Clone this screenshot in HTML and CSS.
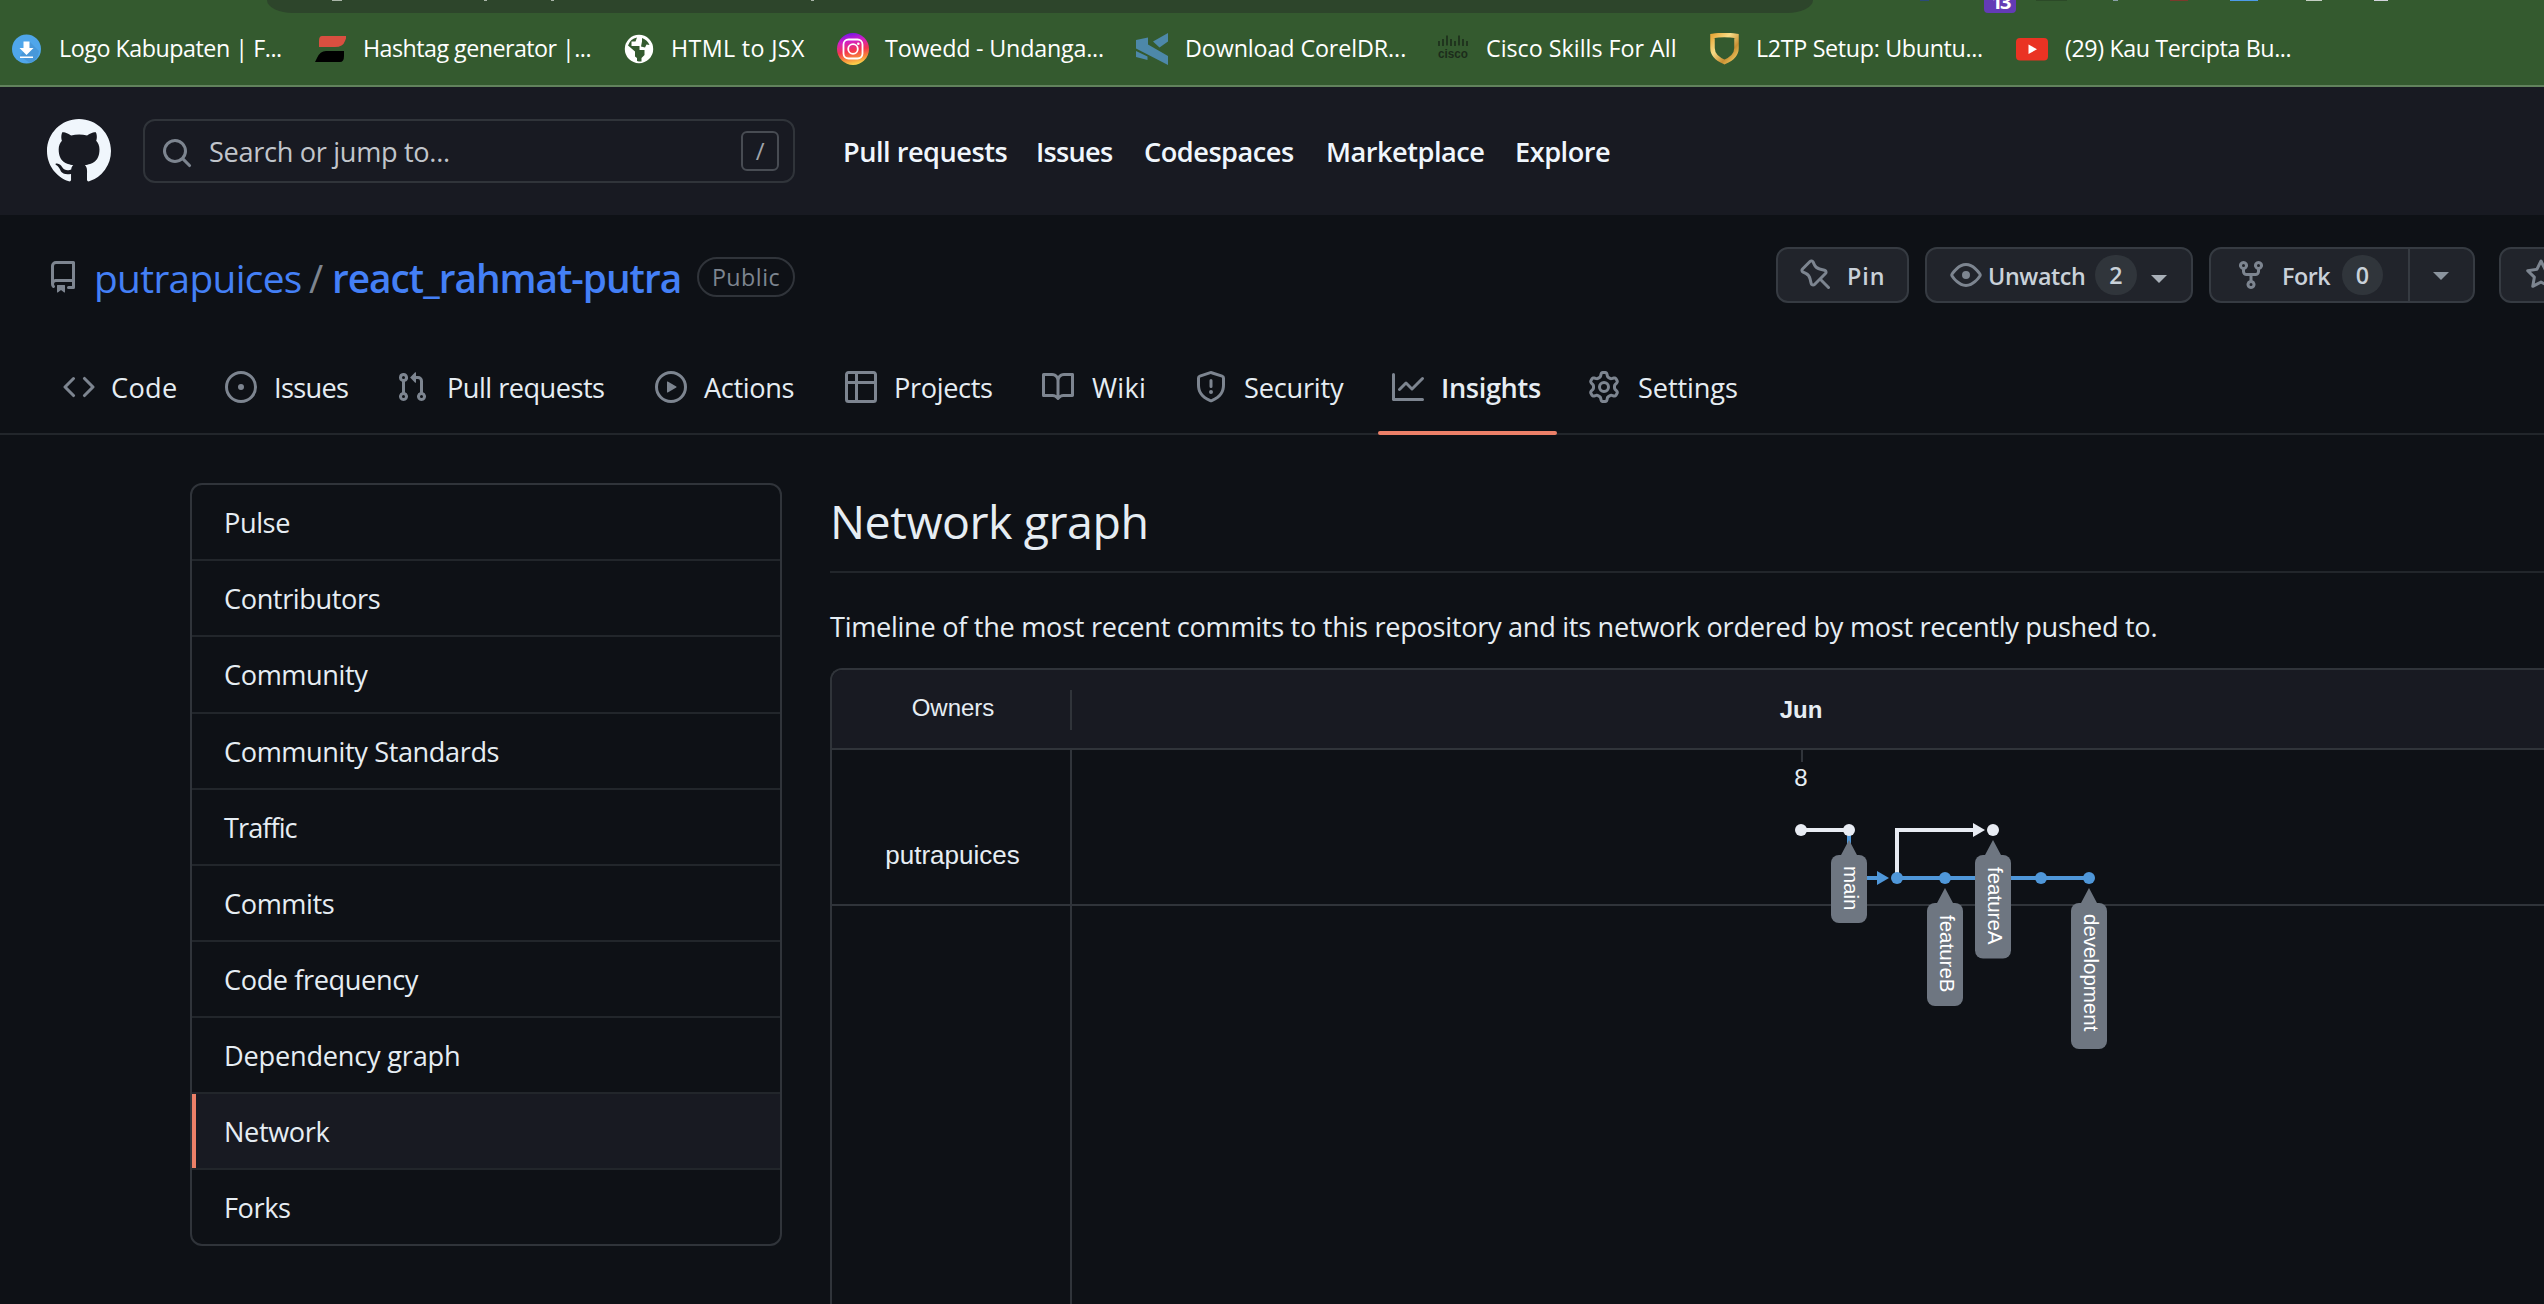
FILE: index.html
```
<!DOCTYPE html>
<html lang="en">
<head>
<meta charset="utf-8">
<title>Network Graph · putrapuices/react_rahmat-putra</title>
<link rel="stylesheet" href="styles.css">
</head>
<body>
<div class="chrome">
  <div class="toolbar">
    <div class="omnibox"><i class="bit b1"></i><i class="bit b2"></i><i class="bit b3"></i><i class="bit b4"></i></div>
    <i class="ext e1"></i>
    <div class="badge"><span>13</span></div>
    <i class="ext e2"></i><i class="ext e3"></i><i class="ext e4"></i><i class="ext e5"></i><i class="ext e6"></i><i class="ext e7"></i>
  </div>
  <div class="bookmarks">
    <a><svg viewBox="0 0 32 32"><circle cx="16.500" cy="16" r="14.500" fill="#4fa6ea"/><path d="M20 9l9 9a14.500 14.500 0 0 1-9 12l-10-7z" fill="#4898d9"/><path d="M13.500 8.500h6v6.500h4l-7 7-7-7h4zM10 23.500h13v1.500H10z" fill="#fff"/></svg><span>Logo Kabupaten | F...</span></a>
    <a><svg viewBox="0 0 32 32"><path d="M8 3h25l-2 5q-2 6-10 6H5V8q0-5 3-5z" fill="#d94f40"/><path d="M12 18h18v5q0 6-4 6H1l2-4q3-7 9-7z" fill="#000"/></svg><span>Hashtag generator |...</span></a>
    <a><svg viewBox="0 0 32 32"><circle cx="17" cy="16" r="14.200" fill="#fff"/><path d="M15 4.500l-1.500 4H9.500v4.500h8v4h5v5l-3 3v3.500A12 12 0 0 1 15 28v-3l-2-1.500v-5L6 12.500Q8.500 5.500 15 4.500zM20 5q5.500 2 7.500 7l-3-.5-1.500 3-4-1 1-5z" fill="#345a2f"/></svg><span>HTML to JSX</span></a>
    <a><svg viewBox="0 0 32 32"><defs><linearGradient id="ig" x1=".25" y1="0" x2=".45" y2="1"><stop offset="0" stop-color="#6a16ea"/><stop offset=".28" stop-color="#d41fc5"/><stop offset=".58" stop-color="#f3364e"/><stop offset=".8" stop-color="#f8853a"/><stop offset="1" stop-color="#fbd34b"/></linearGradient></defs><circle cx="16" cy="16" r="16" fill="url(#ig)"/><g fill="none" stroke="#fff" stroke-width="1.800"><rect x="6.500" y="6.500" width="19" height="19" rx="5"/><circle cx="16" cy="16" r="4.800"/></g><circle cx="21.300" cy="10.700" r="1.300" fill="#fff"/></svg><span>Towedd - Undanga...</span></a>
    <a><svg viewBox="0 0 32 32"><path d="M0 7l12-2.500v7L32 23v9L0 15.500zM17 8.500L32 0v8.500l-8.500 6zM0 18l11.500 5.500V27L0 24z" fill="#4d88a9"/></svg><span>Download CorelDR...</span></a>
    <a><svg viewBox="0 0 32 32"><path d="M2 8v5M6 6v7M10 2.500v10M14 6v7M18 8v5M22 2.500v10M26 6v7M30 8v5" stroke="#1c2c1b" stroke-width="1.600"/><text x="1" y="25" textLength="30" lengthAdjust="spacingAndGlyphs" class="cisco">cisco</text></svg><span>Cisco Skills For All</span></a>
    <a><svg viewBox="0 0 32 32"><defs><linearGradient id="gd" x1="0" y1="0" x2="1" y2="1"><stop offset="0" stop-color="#e8a93a"/><stop offset=".35" stop-color="#f8dc86"/><stop offset=".7" stop-color="#c98f33"/><stop offset="1" stop-color="#f5d268"/></linearGradient></defs><path d="M4.500 3Q16 1 28.500 3V15q0 9-12 14Q4.500 24 4.500 15z" fill="none" stroke="url(#gd)" stroke-width="4.500"/></svg><span>L2TP Setup: Ubuntu...</span></a>
    <a><svg viewBox="0 0 32 32"><rect y="5" width="32" height="22.500" rx="4" fill="#ea3323"/><path d="M12.500 11.500v9.500l8.500-4.800z" fill="#fff"/></svg><span>(29) Kau Tercipta Bu...</span></a>
  </div>
</div>

<header class="topbar">
  <svg class="mark" viewBox="0 0 16 16"><path d="M8 0C3.580 0 0 3.580 0 8c0 3.540 2.290 6.530 5.470 7.590.4.070.55-.17.55-.38 0-.19-.01-.82-.01-1.490-2.010.37-2.530-.49-2.690-.94-.09-.23-.48-.94-.82-1.130-.28-.15-.68-.52-.01-.53.63-.01 1.080.58 1.230.82.72 1.210 1.870.87 2.330.66.070-.52.28-.87.51-1.070-1.780-.2-3.640-.89-3.640-3.950 0-.87.31-1.590.82-2.150-.08-.2-.36-1.020.080-2.120 0 0 .67-.21 2.200.82.64-.18 1.320-.27 2-.27.68 0 1.360.09 2 .27 1.530-1.040 2.200-.82 2.200-.82.44 1.100.16 1.920.080 2.120.51.56.82 1.270.82 2.150 0 3.070-1.870 3.750-3.650 3.950.29.25.54.73.54 1.480 0 1.070-.01 1.930-.01 2.200 0 .21.15.46.55.38A8.013 8.013 0 0016 8c0-4.420-3.580-8-8-8z"/></svg>
  <div class="search">
    <svg class="icon" viewBox="0 0 16 16"><path d="M11.500 7a4.499 4.499 0 11-8.998 0A4.499 4.499 0 0111.500 7zm-.82 4.740a6 6 0 111.060-1.060l3.040 3.040a.75.75 0 11-1.060 1.060l-3.040-3.040z"/></svg>
    <span class="hint">Search or jump to...</span><kbd>/</kbd>
  </div>
  <nav class="global"><a>Pull requests</a><a>Issues</a><a>Codespaces</a><a>Marketplace</a><a>Explore</a></nav>
</header>

<section class="repohead">
  <div class="titlerow">
    <svg class="icon repo" viewBox="0 0 16 16"><path d="M2 2.500A2.500 2.500 0 014.500 0h8.750a.75.75 0 01.75.75v12.500a.75.75 0 01-.75.75h-2.500a.75.75 0 110-1.500h1.750v-2h-8a1 1 0 00-.714 1.700.75.75 0 01-1.072 1.050A2.495 2.495 0 012 11.500v-9zm10.500-1V9h-8c-.356 0-.694.074-1 .208V2.500a1 1 0 011-1h8zM5 12.250v3.250a.25.25 0 00.4.2l1.450-1.087a.25.25 0 01.3 0L8.600 15.700a.25.25 0 00.4-.2v-3.250a.25.25 0 00-.25-.25h-3.500a.25.25 0 00-.25.25z"/></svg>
    <h1><a class="owner">putrapuices</a><span class="sep">/</span><a class="name">react_rahmat-putra</a></h1>
    <span class="pill">Public</span>
    <div class="actions">
      <div class="btn pin"><svg class="icon" viewBox="0 0 16 16"><path d="M4.456.734a1.750 1.750 0 012.826.504l.613 1.327a3.081 3.081 0 002.084 1.707l2.454.584c1.332.317 1.800 1.972.832 2.940L11.060 10l3.720 3.720a.75.75 0 11-1.061 1.060L10 11.060l-2.204 2.205c-.968.968-2.623.5-2.940-.832l-.584-2.454a3.081 3.081 0 00-1.707-2.084l-1.327-.613a1.750 1.750 0 01-.504-2.826L4.456.734zM5.920 1.866a.25.25 0 00-.404-.072L1.794 5.516a.25.25 0 00.072.404l1.328.613A4.582 4.582 0 015.730 9.630l.584 2.454a.25.25 0 00.42.12l5.470-5.470a.25.25 0 00-.12-.42L9.630 5.730a4.581 4.581 0 01-3.098-2.537L5.920 1.866z"/></svg><span>Pin</span></div>
      <div class="btn watch"><svg class="icon" viewBox="0 0 16 16"><path d="M1.679 7.932c.412-.621 1.242-1.750 2.366-2.717C5.175 4.242 6.527 3.500 8 3.500c1.473 0 2.824.742 3.955 1.715 1.124.967 1.954 2.096 2.366 2.717a.119.119 0 010 .136c-.412.621-1.242 1.750-2.366 2.717C10.825 11.758 9.473 12.500 8 12.500c-1.473 0-2.824-.742-3.955-1.715C2.920 9.818 2.090 8.690 1.679 8.068a.119.119 0 010-.136zM8 2c-1.981 0-3.670.992-4.933 2.078C1.797 5.169.88 6.423.43 7.100a1.619 1.619 0 000 1.798c.45.678 1.367 1.932 2.637 3.024C4.329 13.008 6.019 14 8 14c1.981 0 3.670-.992 4.933-2.078 1.270-1.091 2.187-2.345 2.637-3.023a1.619 1.619 0 000-1.798c-.45-.678-1.367-1.932-2.637-3.023C11.671 2.992 9.981 2 8 2zm0 8a2 2 0 100-4 2 2 0 000 4z"/></svg><span>Unwatch</span><b class="count">2</b><i class="caret light"></i></div>
      <div class="btn fork"><div class="forkmain"><svg class="icon" viewBox="0 0 16 16"><path d="M5 3.250a.75.75 0 11-1.500 0 .75.75 0 011.500 0zm0 2.122a2.250 2.250 0 10-1.500 0v.878A2.250 2.250 0 005.750 8.500h1.500v2.128a2.251 2.251 0 101.500 0V8.500h1.500a2.250 2.250 0 002.250-2.250v-.878a2.250 2.250 0 10-1.500 0v.878a.75.75 0 01-.75.75h-4.500A.75.75 0 015 6.250v-.878zm3.750 7.378a.75.75 0 11-1.500 0 .75.75 0 011.500 0zm3-8.750a.75.75 0 100-1.500.75.75 0 000 1.500z"/></svg><span>Fork</span><b class="count">0</b></div><div class="forkmenu"><i class="caret"></i></div></div>
      <div class="btn star"><svg class="icon" viewBox="0 0 16 16"><path d="M8 .25a.75.75 0 01.673.418l1.882 3.815 4.210.612a.75.75 0 01.416 1.279l-3.046 2.970.719 4.192a.75.75 0 01-1.088.791L8 12.347l-3.766 1.980a.75.75 0 01-1.088-.79l.72-4.194L.818 6.374a.75.75 0 01.416-1.280l4.210-.611L7.327.668A.75.75 0 018 .25zm0 2.445L6.615 5.500a.75.75 0 01-.564.41l-3.097.45 2.240 2.184a.75.75 0 01.216.664l-.528 3.084 2.769-1.456a.75.75 0 01.698 0l2.770 1.456-.53-3.084a.75.75 0 01.216-.664l2.240-2.183-3.096-.45a.75.75 0 01-.564-.41L8 2.694v.001z"/></svg></div>
    </div>
  </div>
  <nav class="tabs">
    <a><svg class="icon" viewBox="0 0 16 16"><path d="M4.720 3.220a.75.75 0 011.060 1.060L2.060 8l3.720 3.720a.75.75 0 11-1.060 1.060L.47 8.530a.75.75 0 010-1.060l4.250-4.250zm6.560 0a.75.75 0 10-1.060 1.060L13.940 8l-3.720 3.720a.75.75 0 101.060 1.060l4.250-4.250a.75.75 0 000-1.060l-4.250-4.250z"/></svg><span>Code</span></a>
    <a><svg class="icon" viewBox="0 0 16 16"><path d="M8 9.500a1.500 1.500 0 100-3 1.500 1.500 0 000 3zM8 0a8 8 0 100 16A8 8 0 008 0zM1.500 8a6.500 6.500 0 1113 0 6.500 6.500 0 01-13 0z"/></svg><span>Issues</span></a>
    <a><svg class="icon" viewBox="0 0 16 16"><path d="M7.177 3.073L9.573.677A.25.25 0 0110 .854v4.792a.25.25 0 01-.427.177L7.177 3.427a.25.25 0 010-.354zM3.750 2.500a.75.75 0 100 1.500.75.75 0 000-1.500zm-2.250.75a2.250 2.250 0 113 2.122v5.256a2.251 2.251 0 11-1.500 0V5.372A2.250 2.250 0 011.500 3.250zM11 2.500h-1V4h1a1 1 0 011 1v5.628a2.251 2.251 0 101.500 0V5A2.500 2.500 0 0011 2.500zm1 10.250a.75.75 0 111.500 0 .75.75 0 01-1.500 0zM3.750 12a.75.75 0 100 1.500.75.75 0 000-1.500z"/></svg><span>Pull requests</span></a>
    <a><svg class="icon" viewBox="0 0 16 16"><path d="M1.500 8a6.500 6.500 0 1113 0 6.500 6.500 0 01-13 0zM8 0a8 8 0 100 16A8 8 0 008 0zM6.379 5.227A.25.25 0 006 5.442v5.117a.25.25 0 00.379.214l4.264-2.559a.25.25 0 000-.428L6.379 5.227z"/></svg><span>Actions</span></a>
    <a><svg class="icon" viewBox="0 0 16 16"><path d="M0 1.750C0 .784.784 0 1.750 0h12.500C15.216 0 16 .784 16 1.750v12.500A1.750 1.750 0 0114.250 16H1.750A1.750 1.750 0 010 14.250V1.750zM1.500 6.500v7.750c0 .138.112.25.25.25H5v-8H1.500zM5 5H1.500V1.750a.25.25 0 01.25-.25H5V5zm1.500 1.500v8h7.750a.25.25 0 00.25-.25V6.500h-8zm8-1.500h-8V1.500h7.750a.25.25 0 01.25.25V5z"/></svg><span>Projects</span></a>
    <a><svg class="icon" viewBox="0 0 16 16"><path d="M0 1.750A.75.75 0 01.75 1h4.253c1.227 0 2.317.59 3 1.501A3.744 3.744 0 0111.006 1h4.245a.75.75 0 01.75.75v10.500a.75.75 0 01-.75.75h-4.507a2.250 2.250 0 00-1.591.659l-.622.621a.75.75 0 01-1.060 0l-.622-.621A2.250 2.250 0 005.258 13H.75a.75.75 0 01-.75-.75V1.750zm8.755 3a2.250 2.250 0 012.250-2.250H14.500v9h-3.757c-.71 0-1.400.201-1.992.572l.004-7.322zm-1.504 7.324l.004-5.073-.002-2.253A2.250 2.250 0 005.003 2.500H1.500v9h3.757a3.750 3.750 0 011.994.574z"/></svg><span>Wiki</span></a>
    <a><svg class="icon" viewBox="0 0 16 16"><path d="M7.467.133a1.750 1.750 0 011.066 0l5.250 1.680A1.750 1.750 0 0115 3.480V7c0 1.566-.32 3.182-1.303 4.682-.983 1.498-2.585 2.813-5.032 3.855a1.700 1.700 0 01-1.330 0c-2.447-1.042-4.049-2.357-5.032-3.855C1.320 10.182 1 8.566 1 7V3.480a1.750 1.750 0 011.217-1.667l5.250-1.680zm.61 1.429a.25.25 0 00-.153 0l-5.250 1.680a.25.25 0 00-.174.238V7c0 1.358.275 2.666 1.057 3.860.784 1.194 2.121 2.340 4.366 3.297a.2.2 0 00.154 0c2.245-.956 3.582-2.104 4.366-3.298C13.225 9.666 13.500 8.360 13.500 7V3.480a.25.25 0 00-.174-.237l-5.250-1.680zM9 10.500a1 1 0 11-2 0 1 1 0 012 0zm-.25-5.750a.75.75 0 10-1.500 0v3a.75.75 0 001.500 0v-3z"/></svg><span>Security</span></a>
    <a class="active"><svg class="icon" viewBox="0 0 16 16"><path d="M1.500 1.750a.75.75 0 00-1.500 0v12.500c0 .414.336.75.75.75h14.500a.75.75 0 000-1.500H1.500V1.750zm14.280 2.530a.75.75 0 00-1.060-1.060L10 7.940 7.530 5.470a.75.75 0 00-1.060 0L3.220 8.720a.75.75 0 001.060 1.060L7 7.060l2.470 2.470a.75.75 0 001.060 0l5.250-5.250z"/></svg><span>Insights</span></a>
    <a><svg class="icon" viewBox="0 0 16 16"><path d="M7.429 1.525a6.593 6.593 0 011.142 0c.036.003.108.036.137.146l.289 1.105c.147.56.55.967.997 1.189.174.086.341.183.501.29.417.278.97.423 1.530.27l1.102-.303c.11-.03.175.016.195.046.219.31.41.641.573.989.014.031.022.11-.059.19l-.815.806c-.411.406-.562.957-.53 1.456a4.588 4.588 0 010 .582c-.032.499.119 1.050.53 1.456l.815.806c.08.08.073.159.059.19a6.494 6.494 0 01-.573.99c-.02.029-.086.074-.195.045l-1.103-.303c-.559-.153-1.112-.008-1.529.27-.16.107-.327.204-.5.29-.449.222-.851.628-.998 1.189l-.289 1.105c-.029.11-.101.143-.137.146a6.613 6.613 0 01-1.142 0c-.036-.003-.108-.037-.137-.146l-.289-1.105c-.147-.56-.55-.967-.997-1.189a4.502 4.502 0 01-.501-.29c-.417-.278-.97-.423-1.530-.27l-1.102.303c-.11.03-.175-.016-.195-.046a6.492 6.492 0 01-.573-.989c-.014-.031-.022-.11.059-.19l.815-.806c.411-.406.562-.957.53-1.456a4.587 4.587 0 010-.582c.032-.499-.119-1.050-.53-1.456l-.815-.806c-.08-.08-.073-.159-.059-.19a6.440 6.440 0 01.573-.99c.02-.029.086-.075.195-.045l1.103.303c.559.153 1.112.008 1.529-.27.16-.107.327-.204.5-.29.449-.222.851-.628.998-1.189l.289-1.105c.029-.11.101-.143.137-.146zM8 0c-.236 0-.47.01-.701.03-.743.065-1.290.615-1.458 1.261l-.29 1.106c-.017.066-.078.158-.211.224a5.994 5.994 0 00-.668.386c-.123.082-.233.09-.3.071L3.270 2.776c-.644-.177-1.392.02-1.820.63a7.977 7.977 0 00-.704 1.217c-.315.675-.111 1.422.363 1.891l.815.806c.05.048.098.147.088.294a6.084 6.084 0 000 .772c.01.147-.038.246-.088.294l-.815.806c-.474.469-.678 1.216-.363 1.891.2.428.436.835.704 1.218.428.609 1.176.806 1.820.63l1.103-.303c.066-.019.176-.011.299.071.213.143.436.272.668.386.133.066.194.158.212.224l.289 1.106c.169.646.715 1.196 1.458 1.260a8.094 8.094 0 001.402 0c.743-.064 1.290-.614 1.458-1.260l.29-1.106c.017-.066.078-.158.211-.224a5.980 5.980 0 00.668-.386c.123-.082.233-.09.3-.071l1.102.302c.644.177 1.392-.02 1.820-.63.268-.382.505-.789.704-1.217.315-.675.111-1.422-.364-1.891l-.814-.806c-.05-.048-.098-.147-.088-.294a6.100 6.100 0 000-.772c-.01-.147.039-.246.088-.294l.814-.806c.475-.469.679-1.216.364-1.891a7.992 7.992 0 00-.704-1.218c-.428-.609-1.176-.806-1.820-.63l-1.103.303c-.066.019-.176.011-.299-.071a5.991 5.991 0 00-.668-.386c-.133-.066-.194-.158-.212-.224L10.160 1.290C9.990.645 9.444.095 8.701.031A8.094 8.094 0 008 0zm1.500 8a1.500 1.500 0 11-3 0 1.500 1.500 0 013 0zM11 8a3 3 0 11-6 0 3 3 0 016 0z"/></svg><span>Settings</span></a>
  </nav>
</section>

<main class="layout">
  <nav class="menu">
    <a>Pulse</a><a>Contributors</a><a>Community</a><a>Community Standards</a><a class="tight">Traffic</a><a>Commits</a><a>Code frequency</a><a class="loose">Dependency graph</a><a class="selected">Network</a><a>Forks</a>
  </nav>
  <section class="content">
    <h2>Network graph</h2>
    <p>Timeline of the most recent commits to this repository and its network ordered by most recently pushed to.</p>
    <div class="network">
      <div class="nethead"><div class="owners">Owners</div></div>
      <div class="netrow"><div class="who">putrapuices</div></div>
      <div class="netrest"><div class="who"></div></div>
      <svg class="graph" width="1474" height="634" viewBox="1070 670 1474 634">
        <text x="1801" y="718" class="month">Jun</text>
        <path d="M1802 750v12" stroke="#30343a" stroke-width="2"/>
        <text x="1801" y="786" class="day">8</text>
        <g fill="none" stroke-width="4">
          <path d="M1849 830v48h30M1897 878h192" stroke="#4f97d9"/>
          <path d="M1801 830h48M1897 874v-44h78" stroke="#e8ecf3"/>
        </g>
        <path d="M1877 871l12 7-12 7z" fill="#4f97d9"/>
        <path d="M1973 823l12 7-12 7z" fill="#e8ecf3"/>
        <g fill="#e8ecf3"><circle cx="1801" cy="830" r="6"/><circle cx="1849" cy="830" r="6"/><circle cx="1993" cy="830" r="6"/></g>
        <g fill="#4f97d9"><circle cx="1897" cy="878" r="6"/><circle cx="1945" cy="878" r="6"/><circle cx="2041" cy="878" r="6"/><circle cx="2089" cy="878" r="6"/></g>
        <g fill="#6e7681">
          <path d="M1849 840l8 15h-16z"/><rect x="1831" y="855" width="36" height="68" rx="8"/>
          <path d="M1945 888l8 15h-16z"/><rect x="1927" y="903" width="36" height="103" rx="8"/>
          <path d="M1993 840l8 15h-16z"/><rect x="1975" y="855" width="36" height="103.500" rx="8"/>
          <path d="M2089 888l8 15h-16z"/><rect x="2071" y="903" width="36" height="146" rx="8"/>
        </g>
        <g class="branch">
          <text transform="translate(1843.5 866) rotate(90)">main</text>
          <text transform="translate(1939.5 915) rotate(90)">featureB</text>
          <text transform="translate(1987.5 867) rotate(90)">featureA</text>
          <text transform="translate(2083.5 914) rotate(90)">development</text>
        </g>
      </svg>
    </div>
  </section>
</main>
</body>
</html>
```
FILE: styles.css
```
* { box-sizing: border-box; }
body { margin: 0; height: 1304px; overflow: hidden; background: #0e1116; color: #e6edf3; font: 27.16px/42px "Open Sans", "Noto Sans", sans-serif; letter-spacing: -.013em; }
a, span, h1, h2, p, b { white-space: nowrap; }
svg { display: block; flex: none; }
.icon { width: 32px; height: 32px; fill: #7d8590; fill-rule: evenodd; }

/* browser chrome */
.chrome { height: 87px; background: #345a2f; border-bottom: 2px solid #62825d; color: #fff; }
.toolbar { display: flex; height: 13px; overflow: hidden; }
.omnibox { display: flex; width: 1546px; height: 13px; margin-left: 267px; background: #2d452b; border-radius: 0 0 26px 26px / 0 0 13px 13px; }
.bit { height: 1px; width: 3px; background: #a9b5a8; }
.b1 { width: 10px; margin-left: 65px; }
.b2 { margin-left: 142px; }
.b3 { margin-left: 64px; }
.b4 { margin-left: 257px; }
.ext { height: 1px; }
.e1 { width: 9px; margin-left: 107px; background: #2a4a78; }
.badge { display: flex; align-items: flex-end; justify-content: center; width: 32px; height: 13px; margin-left: 55px; background: #633bb5; border-radius: 0 0 4px 4px; font: 700 20px/28px "Open Sans", sans-serif; letter-spacing: -.12em; }
.badge span { margin-bottom: -3px; }
.e2 { width: 31px; margin-left: 20px; background: #2c4a28; }
.e3 { width: 5px; margin-left: 46px; background: #8aa0a8; }
.e4 { width: 18px; margin-left: 52px; background: #7b3a2c; }
.e5 { width: 28px; margin-left: 42px; background: #4c9be8; }
.e6 { width: 16px; margin-left: 48px; background: #c4cec3; }
.e7 { width: 14px; margin-left: 52px; background: #d3d3dc; }
.bookmarks { display: grid; grid-template-columns: 304px 308px 215px 299px 301px 271px 308px 1fr; height: 72px; padding-left: 10px; font-size: 23.28px; }
.bookmarks a { display: flex; align-items: center; gap: 17px; letter-spacing: -.014em; }
.bookmarks svg { width: 32px; height: 32px; }
.bookmarks span { margin-bottom: 2px; }
.bookmarks a:nth-child(1) { letter-spacing: -.02em; }
.bookmarks a:nth-child(2) { letter-spacing: -.023em; }
.bookmarks a:nth-child(3) { letter-spacing: .015em; }
.bookmarks a:nth-child(4) { letter-spacing: -.008em; gap: 16px; }
.bookmarks a:nth-child(5) { letter-spacing: -.004em; }
.bookmarks a:nth-child(6) { letter-spacing: 0; }
.bookmarks a:nth-child(7) { gap: 16px; }
.bookmarks a:nth-child(8) { letter-spacing: -.017em; }
.cisco { font: 700 13px "Liberation Sans", sans-serif; fill: #1c2c1b; letter-spacing: 0; }

/* site header */
.topbar { display: flex; align-items: center; height: 128px; padding-left: 47px; background: #181a22; }
.mark { width: 64px; height: 64px; fill: #f0f6fc; }
.search { display: flex; align-items: center; width: 652px; height: 64px; margin-left: 32px; padding: 0 14px 0 16px; border: 2px solid #30343a; border-radius: 12px; }
.search .icon { margin-top: 4px; }
.hint { margin: 2px 0 0 16px; color: #c1c5cb; letter-spacing: -.012em; }
kbd { display: grid; place-items: center; width: 38px; height: 40px; margin-left: auto; border: 2px solid #484c53; border-radius: 6px; color: #a0a4aa; font: 24px/30px "Open Sans", sans-serif; }
.global { display: grid; grid-template-columns: 193px 108px 182px 189px auto; margin: 2px 0 0 48px; font-weight: 600; color: #f0f6fc; letter-spacing: -.018em; }
.global a:nth-child(2) { letter-spacing: -.027em; }

/* repository heading */
.repohead { padding-top: 32px; border-bottom: 2px solid #22262b; height: 220px; }
.titlerow { display: flex; align-items: center; height: 56px; padding-left: 47px; }
.titlerow > * { flex: none; }
.repo { margin-top: 4px; }
h1 { display: flex; width: 603px; margin: 6px 0 0 15px; font-size: 38.8px; line-height: 56px; font-weight: 400; color: #4480f6; }
.owner { width: 215px; letter-spacing: -.017em; }
.sep { width: 23px; color: #7d8590; }
.name { font-weight: 600; letter-spacing: -.026em; }
.pill { width: 98px; height: 40px; margin-top: 4px; border: 2px solid #30343a; border-radius: 20px; color: #7d8590; font-size: 23.28px; font-weight: 500; line-height: 37px; text-align: center; letter-spacing: .02em; }
.actions { display: flex; margin-left: 981px; font-size: 23.28px; font-weight: 600; color: #c9d1d9; }
.btn { display: flex; align-items: center; height: 56px; border: 2px solid #363b42; border-radius: 12px; background: #21242b; }
.btn span { margin-top: 2px; }
.btn .icon { margin-bottom: 1px; }
.pin { width: 133px; padding-left: 22px; }
.pin span { margin-left: 15px; letter-spacing: .04em; }
.watch { width: 268px; margin-left: 16px; padding-left: 23px; }
.watch span { width: 98px; margin-left: 6px; letter-spacing: -.016em; }
.count { display: grid; place-items: center; width: 42px; height: 40px; margin-left: 9px; border-radius: 20px; background: #30353b; font-weight: 600; letter-spacing: 0; line-height: 40px; }
.caret { width: 16px; height: 8px; margin-left: 14px; background: #8b949e; clip-path: polygon(0 0, 100% 0, 50% 100%); }
.caret.light { margin-top: 8px; background: #a9b0b8; }
.fork { width: 266px; margin-left: 16px; }
.forkmain { display: flex; align-items: center; height: 52px; width: 199px; padding-left: 24px; border-right: 2px solid #363b42; }
.forkmain span { width: 50px; margin-left: 15px; letter-spacing: -.02em; }
.forkmain .count { width: 41px; margin-left: 10px; }
.forkmenu .caret { display: block; margin-left: 23px; margin-top: 2px; }
.star { width: 120px; margin-left: 24px; padding-left: 24px; }

.tabs { display: grid; grid-template-columns: 162px 171px 259px 190px 197px 153px 197px 196px auto; height: 96px; margin: 36px 0 0 63px; justify-content: start; }
.tabs a { display: flex; align-items: center; position: relative; gap: 17px; }
.tabs span { margin-top: 1px; }
.tabs a:nth-child(1) { letter-spacing: .012em; gap: 16px; }
.tabs a:nth-child(2) { letter-spacing: -.025em; }
.tabs a:nth-child(3) { letter-spacing: -.019em; gap: 19px; }
.tabs a:nth-child(6) { letter-spacing: .01em; gap: 18px; }
.tabs a:nth-child(7) { letter-spacing: -.008em; }
.tabs a:nth-child(9) { gap: 18px; letter-spacing: -.004em; }
.tabs .active { font-weight: 600; }
.active::after { content: ""; position: absolute; left: -14px; bottom: 0; width: 179px; height: 4px; border-radius: 2px; background: #ec8068; }

/* page body */
.layout { display: grid; grid-template-columns: 592px 1fr; column-gap: 48px; padding: 48px 0 0 190px; align-items: start; }
.menu { display: grid; grid-template-rows: 76px 76px 77px repeat(6, 76px) 74px; border: 2px solid #30343a; border-radius: 12px; overflow: hidden; letter-spacing: -.015em; }
.menu a { display: flex; align-items: center; padding: 1px 0 0 32px; border-bottom: 2px solid #22262b; }
.menu a:last-child { border-bottom: 0; }
.menu .tight { letter-spacing: -.035em; }
.menu .loose { letter-spacing: -.008em; }
.menu .selected { background: #181a22; box-shadow: inset 4px 0 #ec8068; }
h2 { margin: 0; height: 90px; border-bottom: 2px solid #22262b; font-size: 46.56px; font-weight: 400; line-height: 76px; letter-spacing: -.01em; }
p { margin: 31px 0 0; letter-spacing: -.011em; line-height: 46px; }
.network { position: relative; height: 640px; margin-top: 18px; border: 2px solid #30343a; border-right: 0; border-radius: 12px 0 0 0; overflow: hidden; font-family: "Liberation Sans", Arial, sans-serif; letter-spacing: 0; }
.nethead { display: flex; align-items: center; height: 80px; background: #181a22; border-bottom: 2px solid #30343a; }
.owners { width: 240px; height: 40px; margin-top: 1px; padding-left: 4px; border-right: 2px solid #30343a; font-size: 24px; line-height: 36px; text-align: center; }
.who { width: 240px; height: 100%; padding: 84px 0 0 3px; border-right: 2px solid #30343a; font-size: 26px; text-align: center; }
.netrow { height: 156px; border-bottom: 2px solid #30343a; }
.netrest { height: 402px; }
.graph { position: absolute; left: 238px; top: 0; }
.month { font-size: 24px; font-weight: 700; fill: #e6edf3; text-anchor: middle; }
.day { font-size: 24px; fill: #e6edf3; text-anchor: middle; }
.branch { font-size: 20.5px; fill: #fff; }
```
